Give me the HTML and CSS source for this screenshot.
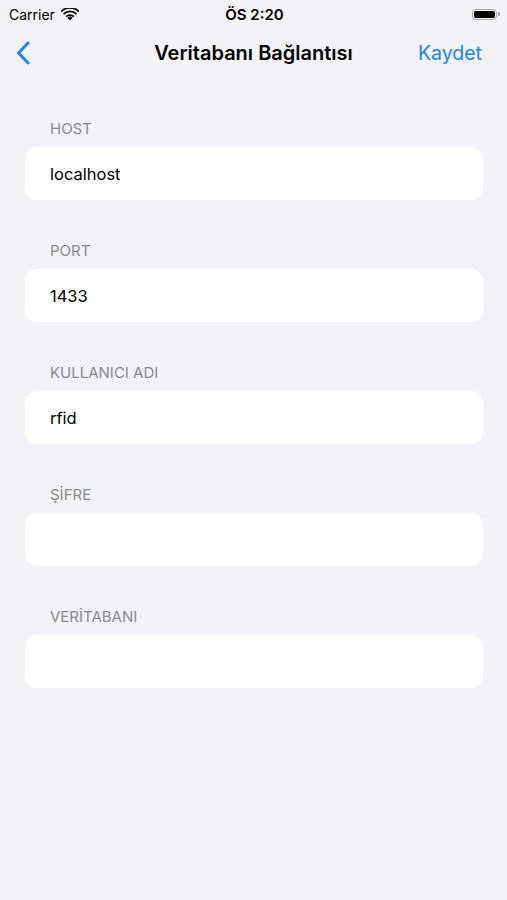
FILE: index.html
```html
<!DOCTYPE html>
<html lang="tr">
<head>
    <meta charset="UTF-8">
    <title>Veritabanı Bağlantısı</title>
    <link rel="stylesheet" href="styles.css">
</head>
<body>
    <div class="status-bar">
        <div class="carrier">
            Carrier
            <svg class="wifi" width="18" height="13" viewBox="0 0 18 13">
                <path d="M9 12.6 L6.4 9.9 A3.7 3.7 0 0 1 11.6 9.9 Z" fill="#000"/>
                <path d="M4.6 8.1 A6.3 6.3 0 0 1 13.4 8.1 L12.2 9.3 A4.6 4.6 0 0 0 5.8 9.3 Z" fill="#000"/>
                <path d="M2 5.5 A9.9 9.9 0 0 1 16 5.5 L14.8 6.7 A8.2 8.2 0 0 0 3.2 6.7 Z" fill="#000"/>
                <path d="M-0.5 3 A13.4 13.4 0 0 1 18.5 3 L17.3 4.2 A11.8 11.8 0 0 0 0.7 4.2 Z" fill="#000"/>
            </svg>
        </div>
        <div class="time">ÖS 2:20</div>
        <div class="battery">
            <div class="battery-body"><div class="battery-fill"></div></div>
            <div class="battery-cap"></div>
        </div>
    </div>

    <div class="nav-bar">
        <div class="nav-back">
            <svg width="14" height="24" viewBox="0 0 14 24">
                <path d="M12 2 L2.5 12 L12 22" fill="none" stroke="#1c84f6" stroke-width="3" stroke-linecap="round" stroke-linejoin="round"/>
            </svg>
        </div>
        <div class="nav-title">Veritabanı Bağlantısı</div>
        <div class="nav-action">Kaydet</div>
    </div>

    <div class="form">
        <div class="field">
            <div class="field-label">HOST</div>
            <div class="field-box">localhost</div>
        </div>
        <div class="field">
            <div class="field-label">PORT</div>
            <div class="field-box">1433</div>
        </div>
        <div class="field">
            <div class="field-label">KULLANICI ADI</div>
            <div class="field-box">rfid</div>
        </div>
        <div class="field">
            <div class="field-label">ŞİFRE</div>
            <div class="field-box"></div>
        </div>
        <div class="field">
            <div class="field-label">VERİTABANI</div>
            <div class="field-box"></div>
        </div>
    </div>
</body>
</html>
```

FILE: styles.css
```css
body {
    margin: 0;
    width: 507px;
    height: 900px;
    background-color: #f2f2f7;
    font-family: Inter, "Liberation Sans", sans-serif;
    color: #000;
    overflow: hidden;
}

.status-bar {
    height: 28px;
    display: flex;
    align-items: center;
    justify-content: space-between;
    padding: 0 7px 0 9px;
}

.carrier {
    display: flex;
    align-items: center;
    gap: 6px;
    font-size: 14px;
    width: 100px;
}

.time {
    font-size: 15px;
    font-weight: 600;
}

.battery {
    width: 100px;
    display: flex;
    justify-content: flex-end;
    align-items: center;
}

.battery-body {
    width: 25px;
    height: 11px;
    border: 1px solid #a8a8a8;
    border-radius: 4px;
    padding: 1px;
    box-sizing: border-box;
}

.battery-fill {
    width: 100%;
    height: 100%;
    background: #000;
    border-radius: 2px;
}

.battery-cap {
    width: 2px;
    height: 4px;
    background: #a8a8a8;
    border-radius: 0 1px 1px 0;
    margin-left: 1px;
}

.nav-bar {
    height: 50px;
    display: grid;
    grid-template-columns: 1fr auto 1fr;
    align-items: center;
}

.nav-back {
    padding-left: 16px;
    display: flex;
    align-items: center;
}

.nav-title {
    font-size: 20px;
    font-weight: 600;
}

.nav-action {
    padding-right: 25px;
    text-align: right;
    font-size: 19.5px;
    color: #1c84f6;
}

.form {
    padding: 41px 24px 0 25px;
    display: flex;
    flex-direction: column;
    gap: 41px;
}

.field {
    display: flex;
    flex-direction: column;
    gap: 8px;
}

.field-label {
    padding-left: 25px;
    font-size: 15px;
    line-height: 20px;
    color: #8a8a8e;
}

.field-box {
    height: 53px;
    background: #fff;
    border-radius: 12px;
    padding: 0 25px;
    display: flex;
    align-items: center;
    font-size: 16.5px;
}
```
